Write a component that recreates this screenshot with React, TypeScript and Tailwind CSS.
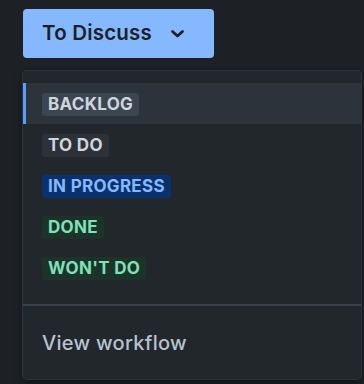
import React from "react";

const items = [
  { label: "BACKLOG", bg: "bg-[#a1bdd924]", fg: "text-[#cdd6df]", selected: true },
  { label: "TO DO", bg: "bg-[#a1bdd914]", fg: "text-[#cdd6df]" },
  { label: "IN PROGRESS", bg: "bg-[#09326c]", fg: "text-[#85b8ff]" },
  { label: "DONE", bg: "bg-[#1c3329]", fg: "text-[#7ee2b8]" },
  { label: "WON'T DO", bg: "bg-[#1c3329]", fg: "text-[#7ee2b8]" },
];

export default function App() {
  return (
    <div
      className="w-[364px] h-[384px] bg-[#1d2125] overflow-hidden relative"
      style={{ fontFamily: "Inter, 'Noto Sans', sans-serif" }}
    >
      <div className="pt-[9px] pl-[23px]">
        <button className="h-[49px] w-[191px] rounded-[4px] bg-[#85b8ff] flex items-center pl-[19px] text-[#1d2125] text-[20.5px] font-semibold tracking-[0.2px]">
          <span>To Discuss</span>
          <svg className="ml-[18px]" width="15" height="10" viewBox="0 0 15 10">
            <path d="M2.5 2.5 L7.5 7 L12.5 2.5" fill="none" stroke="#1d2125" strokeWidth="2.8" strokeLinecap="round" strokeLinejoin="round" />
          </svg>
        </button>
      </div>
      <div className="ml-[23px] mt-[13px] w-[338px] rounded-[4px] bg-[#22272b] shadow-[0_0_0_1px_#2c333a,0_4px_8px_#03040480]">
        <div className="pt-[12px] pb-[16px]">
          {items.map((it) => (
            <div
              key={it.label}
              className={`h-[41px] flex items-center pl-[16px] border-l-[3px] ${
                it.selected ? "bg-[#2c333a] border-[#579dff]" : "border-transparent"
              }`}
            >
              <span
                className={`h-[23px] mt-[2px] px-[6px] rounded-[3px] flex items-center text-[17px] font-bold tracking-[0.3px] ${it.bg} ${it.fg}`}
              >
                {it.label}
              </span>
            </div>
          ))}
        </div>
        <div className="h-[2px] bg-[#38414a]" />
        <div className="h-[73px] flex items-center pl-[19px] text-[20px] font-medium tracking-[0.3px] text-[#b6c2cf]">
          View workflow
        </div>
      </div>
    </div>
  );
}
